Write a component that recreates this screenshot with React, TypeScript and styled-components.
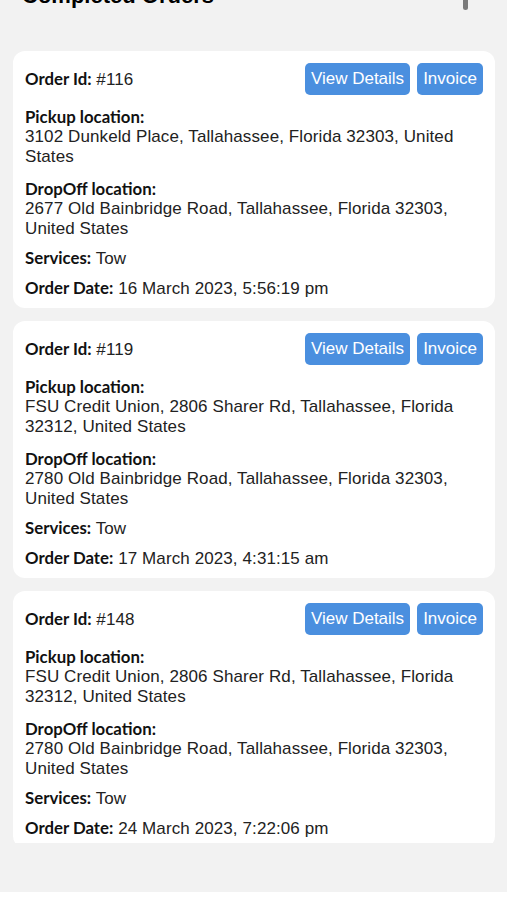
import styled, { createGlobalStyle } from "styled-components"

type Order = {
  id: number
  pickup: string
  dropoff: string
  service: string
  date: string
}

const orders: Order[] = [
  {
    id: 116,
    pickup: "3102 Dunkeld Place, Tallahassee, Florida 32303, United States",
    dropoff: "2677 Old Bainbridge Road, Tallahassee, Florida 32303, United States",
    service: "Tow",
    date: "16 March 2023, 5:56:19 pm",
  },
  {
    id: 119,
    pickup: "FSU Credit Union, 2806 Sharer Rd, Tallahassee, Florida 32312, United States",
    dropoff: "2780 Old Bainbridge Road, Tallahassee, Florida 32303, United States",
    service: "Tow",
    date: "17 March 2023, 4:31:15 am",
  },
  {
    id: 148,
    pickup: "FSU Credit Union, 2806 Sharer Rd, Tallahassee, Florida 32312, United States",
    dropoff: "2780 Old Bainbridge Road, Tallahassee, Florida 32303, United States",
    service: "Tow",
    date: "24 March 2023, 7:22:06 pm",
  },
]

const GlobalStyle = createGlobalStyle`
  html, body {
    margin: 0;
    padding: 0;
    background: #ffffff;
  }
  * {
    box-sizing: border-box;
  }
`

const Screen = styled.div`
  /* Screen */
  display: flex;
  flex-direction: column;
  width: 507px;
  height: 900px;
  overflow: hidden;
  background: #ffffff;
`

const ScrollArea = styled.div`
  position: relative;
  height: 843px;
  overflow: hidden;
  background: #f2f2f2;
  flex: none;
`

const ScrollContent = styled.div`
  display: flex;
  flex-direction: column;
  margin-top: -17px;
`

const Title = styled.h1`
  margin: 0 0 0 22px;
  height: 26px;
  font-family: "Liberation Sans", Arial, sans-serif;
  font-weight: bold;
  font-size: 22px;
  line-height: 26px;
  color: #000000;
`

const ScrollIndicator = styled.div`
  position: absolute;
  top: -4px;
  left: 463px;
  width: 5px;
  height: 14px;
  border-radius: 3px;
  background: #7b7b7b;
`

const CardList = styled.div`
  display: flex;
  flex-direction: column;
  gap: 13px;
  margin-top: 42px;
  padding: 0 12px 0 13px;
`

const Card = styled.div`
  display: flex;
  flex-direction: column;
  padding: 12px 12px 9px 12px;
  background: #ffffff;
  border-radius: 12px;
`

const HeaderRow = styled.div`
  display: flex;
  flex-direction: row;
  align-items: center;
  justify-content: space-between;
  height: 32px;
`

const Actions = styled.div`
  display: flex;
  gap: 7px;
`

const Button = styled.button`
  height: 32px;
  padding: 0 6px;
  border: none;
  border-radius: 5px;
  background: #4a8fdf;
  color: #ffffff;
  font-family: "Liberation Sans", Arial, sans-serif;
  font-size: 17px;
  line-height: 32px;
  cursor: pointer;
`

const Field = styled.div<{ $gap?: number }>`
  margin-top: ${(p) => p.$gap ?? 10}px;
  font-family: "Liberation Sans", Arial, sans-serif;
  font-size: 17px;
  letter-spacing: 0.1px;
  line-height: 20px;
  color: #222222;
`

const Label = styled.span`
  font-family: Lato, "Liberation Sans", sans-serif;
  font-weight: bold;
  font-size: 16.8px;
  letter-spacing: 0;
  color: #111111;
`

const BlockLabel = styled(Label)`
  display: block;
`

const Spacer = styled.div`
  height: 49px;
  background: #f2f2f2;
  flex: none;
`

const Footer = styled.div`
  flex: 1;
  background: #ffffff;
`

const OrderCard: React.FC<{ order: Order }> = ({ order }) => (
  <Card>
    <HeaderRow>
      <Field $gap={0}>
        <Label>Order Id:</Label> #{order.id}
      </Field>
      <Actions>
        <Button>View Details</Button>
        <Button>Invoice</Button>
      </Actions>
    </HeaderRow>
    <Field $gap={12}>
      <BlockLabel>Pickup location:</BlockLabel>
      {order.pickup}
    </Field>
    <Field $gap={12}>
      <BlockLabel>DropOff location:</BlockLabel>
      {order.dropoff}
    </Field>
    <Field $gap={9}>
      <Label>Services:</Label> {order.service}
    </Field>
    <Field $gap={9}>
      <Label>Order Date:</Label> {order.date}
    </Field>
  </Card>
)

const App: React.FC = () => {
  return (
    <>
      <GlobalStyle />
      <Screen>
        <ScrollArea>
          <ScrollContent>
            <Title>Completed Orders</Title>
            <CardList>
              {orders.map((o) => (
                <OrderCard key={o.id} order={o} />
              ))}
            </CardList>
          </ScrollContent>
          <ScrollIndicator />
        </ScrollArea>
        <Spacer />
        <Footer />
      </Screen>
    </>
  )
}

export default App
